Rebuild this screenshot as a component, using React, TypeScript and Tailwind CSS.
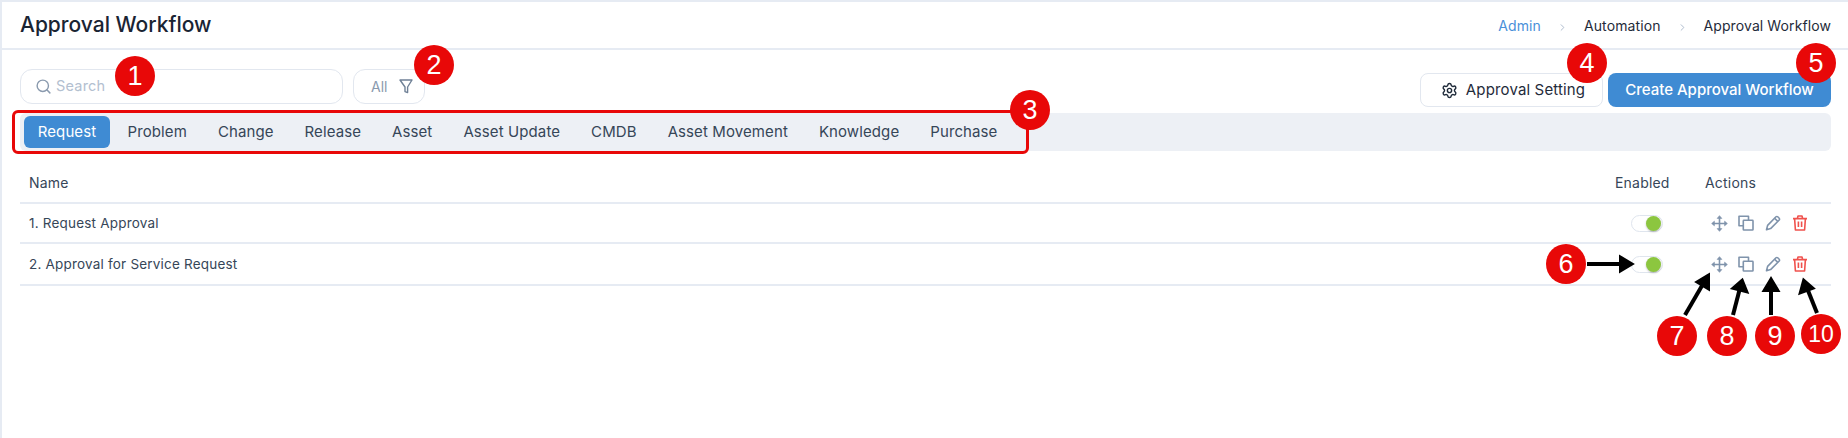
import { ChevronRight, Search, Settings } from "lucide-react";

const tabs = ["Request", "Problem", "Change", "Release", "Asset", "Asset Update", "CMDB", "Asset Movement", "Knowledge", "Purchase"];
const rows = [
  { name: "1. Request Approval", height: "h-[40px]" },
  { name: "2. Approval for Service Request", height: "h-[42px]" },
];

function MoveIcon() {
  return (
    <svg width="17" height="17" viewBox="0 0 16 16" fill="currentColor" stroke="currentColor" strokeWidth="1.5" className="-mx-[0.5px]">
      <path d="M8 2v12M2 8h12" fill="none" />
      <path d="M8 .6 5.8 3.2h4.4ZM8 15.4 5.8 12.8h4.4ZM.6 8 3.2 5.8v4.4ZM15.4 8 12.8 5.8v4.4Z" strokeWidth="0.6" />
    </svg>
  );
}

function CopyIcon() {
  return (
    <svg width="16" height="16" viewBox="0 0 16 16" fill="none" stroke="currentColor" strokeWidth="1.6" strokeLinejoin="round">
      <path d="M10.5 5.3V1.2H1v9.6h4.3" />
      <rect x="5.3" y="5.3" width="9.7" height="9.7" rx="0.6" />
    </svg>
  );
}

function PencilIcon() {
  return (
    <svg width="16" height="16" viewBox="0 0 16 16" fill="none" stroke="currentColor" strokeWidth="1.6" strokeLinejoin="round">
      <path d="M11 1.8a1.2 1.2 0 0 1 1.7 0l1.5 1.5a1.2 1.2 0 0 1 0 1.7L5.6 13.6 1.5 14.7 2.6 10.4Z" />
      <path d="M9.6 3.2 12.8 6.4" />
    </svg>
  );
}

function TrashIcon() {
  return (
    <svg width="16" height="16" viewBox="0 0 16 16" fill="none" stroke="currentColor" strokeWidth="1.6" strokeLinejoin="round">
      <path d="M1 3.6h14M5.4 3.4 6 1h4l.6 2.4" />
      <path d="M2.6 3.6 3.4 15h9.2l.8-11.4" />
      <path d="M6.4 6.6v5.4M9.6 6.6v5.4" />
    </svg>
  );
}

function FilterIcon() {
  return (
    <svg width="14" height="15" viewBox="0 0 14 15" fill="none" stroke="#6f8096" strokeWidth="1.4" strokeLinejoin="round">
      <path d="M1 1h12L8.6 8v5.6L6 12.6V8Z" />
    </svg>
  );
}

function Badge({ n, className, small }: { n: number; className: string; small?: boolean }) {
  return (
    <span className={`absolute flex h-10 w-10 items-center justify-center rounded-full bg-[#e80808] font-['Liberation_Sans',sans-serif] leading-none text-white ${small ? "text-[23px]" : "text-[27px]"} ${className}`}>
      {n}
    </span>
  );
}

function Toggle() {
  return (
    <div className="ml-4 flex h-[17px] w-[32px] items-center justify-end rounded-full border border-[#dfe5ee] bg-white">
      <span className="mr-[1px] h-[15px] w-[15px] rounded-full bg-[#8cc63f] shadow-[0_1px_2px_rgba(0,0,0,0.25)]" />
    </div>
  );
}

export default function App() {
  return (
    <div className="relative h-[438px] overflow-hidden border-t-2 border-l-2 border-[#e6ebf3] bg-white font-['Inter',sans-serif] text-[#364658]">
      <header className="flex h-[48px] items-center justify-between border-b-2 border-[#e6ebf3] pr-[17px] pl-[18px]">
        <h1 className="text-[21px] font-medium text-[#1a2433]">Approval Workflow</h1>
        <nav className="flex items-center text-[14px] tracking-[0.1px] text-[#1f2b3a]">
          <span className="text-[#4a90d9]">Admin</span>
          <ChevronRight size={11} className="mx-[16px] mt-1 text-[#a9b7c9]" />
          <span>Automation</span>
          <ChevronRight size={11} className="mx-[16px] mt-1 text-[#a9b7c9]" />
          <span>Approval Workflow</span>
        </nav>
      </header>

      <main className="pr-[17px] pl-[18px]">
        <div className="flex h-[63px] items-start pt-[19px]">
          <div className="flex h-[35px] w-[323px] items-center gap-[4px] rounded-xl border border-[#e2e7ef] pb-[1px] pl-[14px]">
            <Search size={17} className="text-[#8a9aae]" />
            <span className="text-[14.5px] tracking-[0.2px] text-[#b3c0d0]">Search</span>
          </div>
          <div className="ml-[10px] flex h-[35px] w-[72px] items-center gap-[12px] rounded-xl border border-[#e2e7ef] pl-[17px]">
            <span className="text-[14px] text-[#8a9aae]">All</span>
            <FilterIcon />
          </div>
          <div className="mt-[4px] ml-auto flex gap-[5px]">
            <button className="flex h-[34px] w-[183px] items-center justify-center gap-2 rounded-lg border border-[#e2e7ef] pl-[3px] text-[15px] tracking-[0.15px] text-[#1f2b3a]">
              <Settings size={17} />
              Approval Setting
            </button>
            <button className="h-[34px] w-[223px] rounded-lg bg-[#3f8bd3] text-[15px] font-medium text-white">
              Create Approval Workflow
            </button>
          </div>
        </div>

        <div className="relative flex h-[38px] items-center rounded-md bg-[#edf0f5] pl-1">
          {tabs.map((tab, i) => (
            <span
              key={tab}
              className={`flex h-[32px] items-center justify-center rounded-md pt-[1px] text-[15px] tracking-[0.1px] ${i === 0 ? "mr-[2px] w-[86px] bg-[#3f8bd3] text-white" : "px-[15.5px]"}`}
            >
              {tab}
            </span>
          ))}
          <div className="absolute top-[-3px] left-[-8px] h-[44px] w-[1017px] rounded-md border-[3px] border-[#e80808]" />
        </div>

        <div className="flex h-[53px] items-center border-b-2 border-[#e6ebf3] pt-[12px] text-[14px] tracking-[0.2px]">
          <span className="flex-1 pl-[9px]">Name</span>
          <span className="w-[90px]">Enabled</span>
          <span className="w-[126px]">Actions</span>
        </div>
        {rows.map((row) => (
          <div key={row.name} className={`flex items-center border-b-2 border-[#e6ebf3] text-[13.5px] tracking-[0.2px] ${row.height}`}>
            <span className="flex-1 pl-[9px]">{row.name}</span>
            <div className="w-[90px]">
              <Toggle />
            </div>
            <div className="flex w-[126px] items-center gap-[11px] pl-[6px] text-[#7f93ab]">
              <MoveIcon />
              <CopyIcon />
              <PencilIcon />
              <span className="text-[#f0524d]">
                <TrashIcon />
              </span>
            </div>
          </div>
        ))}
      </main>

      {/* annotation layer; the page border takes 2px so offsets are shifted */}
      <svg className="absolute top-[-2px] left-[-2px] h-[438px] w-[1848px]" fill="none" stroke="#000" strokeWidth={4}>
        <path d="M1587 264H1622" />
        <path d="M1621 258L1631 264L1621 270Z" fill="#000" />
        <path d="M1685 315L1703 284" />
        <path d="M1708 276L1698 282L1708 288Z" fill="#000" />
        <path d="M1733 315L1740 288" />
        <path d="M1742 281L1734 288L1746 291Z" fill="#000" />
        <path d="M1771 315V288" />
        <path d="M1771 280L1765 290H1777Z" fill="#000" />
        <path d="M1817 313L1807 288" />
        <path d="M1804 281L1801 292L1812 288Z" fill="#000" />
      </svg>
      <Badge n={1} className="top-[54px] left-[113px]" />
      <Badge n={2} className="top-[43px] left-[412px]" />
      <Badge n={3} className="top-[88px] left-[1008px]" />
      <Badge n={4} className="top-[41px] left-[1565px]" />
      <Badge n={5} className="top-[41px] left-[1794px]" />
      <Badge n={6} className="top-[242px] left-[1544px]" />
      <Badge n={7} className="top-[314px] left-[1655px]" />
      <Badge n={8} className="top-[314px] left-[1705px]" />
      <Badge n={9} className="top-[314px] left-[1753px]" />
      <Badge n={10} small className="top-[312px] left-[1799px]" />
    </div>
  );
}
